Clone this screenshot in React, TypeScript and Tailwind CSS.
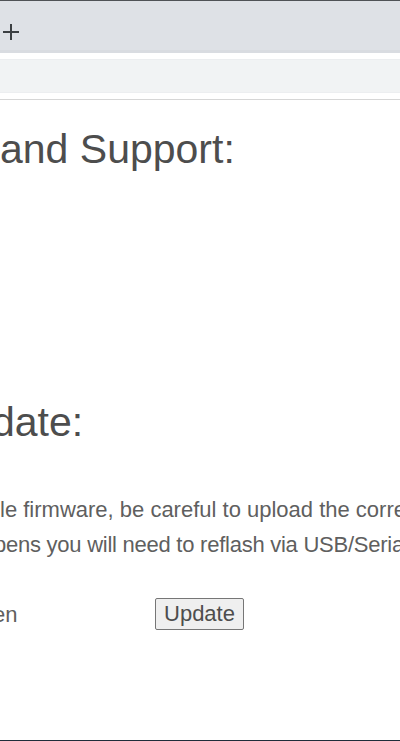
import React from "react";

function Clipped({
  prefix,
  text,
  className,
}: {
  prefix: string;
  text: string;
  className: string;
}) {
  return (
    <div className={`flex whitespace-nowrap ${className}`}>
      <span className="flex w-0 justify-end" aria-hidden="true">
        <span className="shrink-0">{prefix}</span>
      </span>
      <span>{text}</span>
    </div>
  );
}

export default function App() {
  return (
    <div
      className="relative flex h-[741px] w-[400px] flex-col overflow-hidden bg-white"
      style={{ fontFamily: '"Liberation Sans", Arial, sans-serif' }}
    >
      {/* window top edge */}
      <div className="h-px shrink-0 bg-[#4f5256]" />
      {/* tab strip */}
      <div className="flex h-[52px] shrink-0 items-start border-b-[3px] border-[#d9dce1] bg-[#dee1e6] pt-[22px]">
        <svg
          width="18"
          height="18"
          viewBox="0 0 18 18"
          className="ml-[2px]"
          fill="none"
          stroke="#3c4043"
          strokeWidth="2"
        >
          <path d="M9 1v16M1 9h16" />
        </svg>
      </div>
      <div className="h-[6px] shrink-0 bg-white" />
      {/* address bar */}
      <div className="h-[34px] shrink-0 border-y border-[#eceef0] bg-[#f1f3f4]" />
      <div className="h-[6px] shrink-0 bg-white" />
      <div className="h-px shrink-0 bg-[#d6d6d6]" />

      {/* page content */}
      <div className="flex flex-1 flex-col">
        <Clipped
          prefix="Help "
          text="and Support:"
          className="mt-[26px] h-[47px] text-[41px] leading-[47px] text-[#4d4d4d]"
        />
        <Clipped
          prefix="Firmware Up"
          text="date:"
          className="-ml-[8px] mt-[226px] h-[47px] text-[41px] leading-[47px] text-[#4d4d4d]"
        />
        <div className="mt-[46px] text-[22px] leading-[35px] text-[#5f5f5f]">
          <Clipped
            prefix="Upload a compatib"
            text="le firmware, be careful to upload the correct file."
            className=""
          />
          <Clipped
            prefix="If this hap"
            text="pens you will need to reflash via USB/Serial."
            className="-ml-[6px] tracking-[-0.25px]"
          />
        </div>
        <div className="mt-[36px] flex h-[32px] items-center text-[22px] text-[#5f5f5f]">
          <Clipped
            prefix="Choose File  No file chos"
            text="en"
            className="-ml-[7px] w-[162px] shrink-0"
          />
          <button
            type="button"
            className="h-[32px] w-[89px] rounded-[2px] border border-[#767676] bg-[#efefef] text-[22px] leading-[30px] text-[#4d4d4d]"
          >
            Update
          </button>
        </div>
      </div>

      {/* window bottom edge */}
      <div className="h-px shrink-0 bg-[#1f2d3a]" />
    </div>
  );
}
